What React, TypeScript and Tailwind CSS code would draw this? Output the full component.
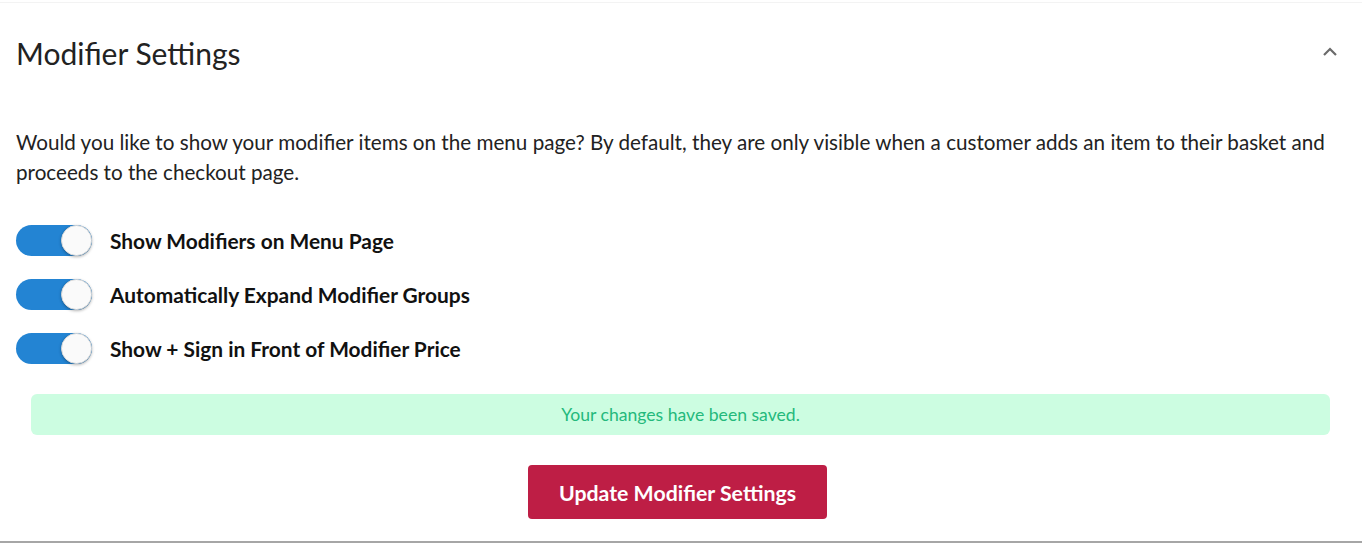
import React from "react";

function Toggle() {
  return (
    <div className="relative h-[31px] w-[76px] shrink-0 rounded-full bg-[#2384d3]">
      <div className="absolute right-0 top-0 h-[31px] w-[31px] rounded-full border border-[#d9d9d9] bg-[#fafafa] shadow-[0_1px_3px_rgba(0,0,0,0.3)]" />
    </div>
  );
}

const rows = [
  "Show Modifiers on Menu Page",
  "Automatically Expand Modifier Groups",
  "Show + Sign in Front of Modifier Price",
];

export default function App() {
  return (
    <div className="h-[553px] w-[1362px] bg-white" style={{ fontFamily: "Lato, 'Noto Sans', sans-serif" }}>
      <div className="mt-[2px] h-[541px] border-t border-[#f3f3f3] border-b-[2px] border-b-[#a6a6a6] bg-white">
        <div className="flex items-center justify-between pl-4 pr-[24px] pt-[32px]">
          <h2 className="text-[30px] leading-[36px] text-[#222]">Modifier Settings</h2>
          <svg width="16" height="10" viewBox="0 0 16 10" className="mt-[-2px]">
            <path d="M2 8 L8 2 L14 8" fill="none" stroke="#6b6b6b" strokeWidth="2.2" />
          </svg>
        </div>
        <p className="mt-[56px] pl-4 pr-6 text-[20.65px] leading-[30px] text-[#222]">
          Would you like to show your modifier items on the menu page? By default, they are only visible when a customer adds an item to their basket and proceeds to the checkout page.
        </p>
        <div className="mt-[38px] flex flex-col gap-[23px] pl-4">
          {rows.map((r) => (
            <div key={r} className="flex h-[31px] items-center gap-[18px]">
              <Toggle />
              <span className="text-[20.9px] font-bold leading-[30px] text-[#111]">{r}</span>
            </div>
          ))}
        </div>
        <div className="ml-[31px] mr-[32px] mt-[30px] flex h-[41px] items-center justify-center rounded-[6px] bg-[#ccfde1] pt-[1px] text-[17.6px] text-[#24b97c]">
          Your changes have been saved.
        </div>
        <div className="mt-[30px] flex justify-center pr-[7px]">
          <button className="h-[54px] w-[299px] rounded-[4px] bg-[#be1e45] pt-[3px] text-[21.3px] font-bold text-white">
            Update Modifier Settings
          </button>
        </div>
      </div>
    </div>
  );
}
